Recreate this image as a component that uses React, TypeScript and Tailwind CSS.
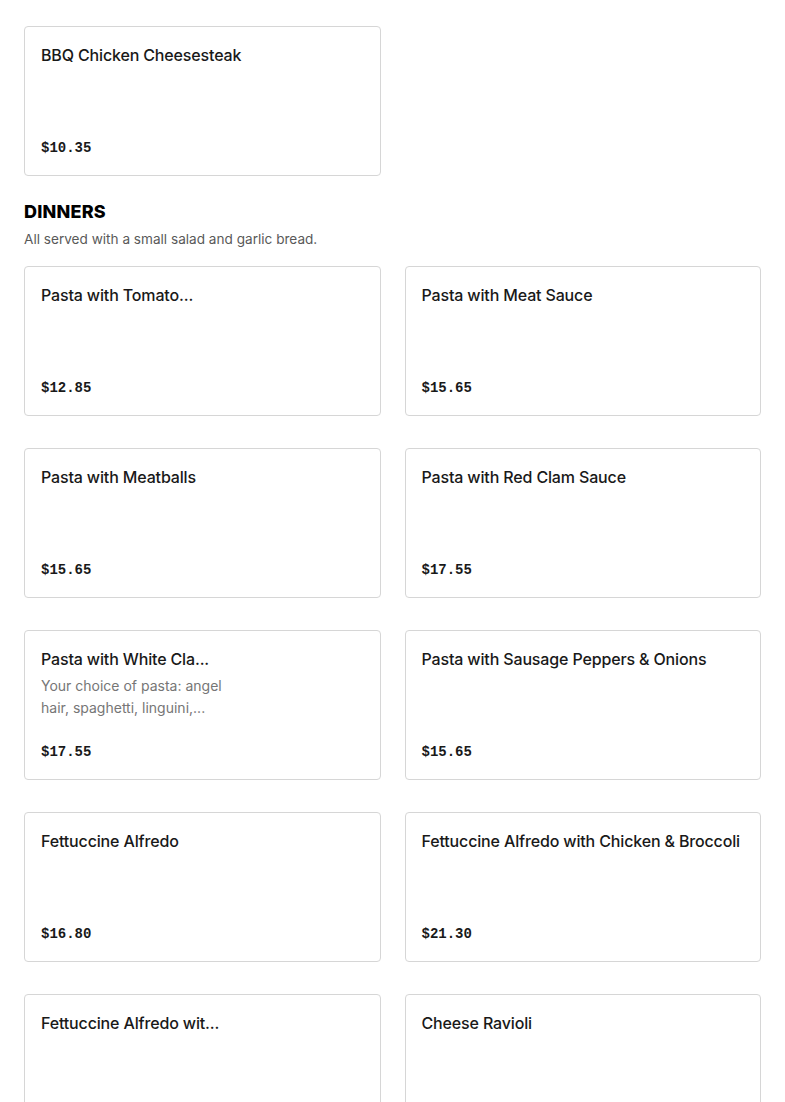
type Item = {
  name: string;
  price?: string;
  desc?: string;
  short?: boolean;
};

const dinners: Item[] = [
  { name: "Pasta with Tomato...", price: "$12.85", short: true },
  { name: "Pasta with Meat Sauce", price: "$15.65" },
  { name: "Pasta with Meatballs", price: "$15.65" },
  { name: "Pasta with Red Clam Sauce", price: "$17.55" },
  {
    name: "Pasta with White Cla...",
    price: "$17.55",
    short: true,
    desc: "Your choice of pasta: angel hair, spaghetti, linguini,...",
  },
  { name: "Pasta with Sausage Peppers & Onions", price: "$15.65" },
  { name: "Fettuccine Alfredo", price: "$16.80" },
  { name: "Fettuccine Alfredo with Chicken & Broccoli", price: "$21.30" },
  { name: "Fettuccine Alfredo wit...", price: "$18.90", short: true },
  { name: "Cheese Ravioli", price: "$14.95" },
];

const Card = ({ item }: { item: Item }) => {
  return (
    <div className="h-[150px] rounded-[4px] border border-[#d6d6d6] bg-white px-4 pt-[16px] pb-[17px] flex flex-col">
      <div
        className={
          "text-[16px] leading-[24px] font-medium tracking-[-0.15px] text-[#191919] whitespace-nowrap " +
          (item.short ? "w-[190px]" : "")
        }
      >
        {item.name}
      </div>
      {item.desc && (
        <div className="mt-[4px] w-[190px] text-[14px] leading-[22px] text-[#767676]">
          {item.desc}
        </div>
      )}
      <div className="mt-auto font-['Liberation_Mono',monospace] text-[14px] leading-[20px] font-bold text-[#191919]">
        {item.price}
      </div>
    </div>
  );
};

export default function App() {
  return (
    <div className="min-h-screen bg-white px-6 pt-[26px] font-['Inter',sans-serif]">
      <div className="grid grid-cols-2 gap-x-6">
        <Card item={{ name: "BBQ Chicken Cheesesteak", price: "$10.35" }} />
      </div>

      <div className="mt-[24px]">
        <h2 className="text-[18px] leading-[24px] font-extrabold tracking-[0.2px] text-black">
          DINNERS
        </h2>
        <p className="mt-[5px] text-[13.6px] leading-[20px] text-[#595959]">
          All served with a small salad and garlic bread.
        </p>
      </div>

      <div className="mt-[17px] grid grid-cols-2 gap-x-6 gap-y-8 pb-10">
        {dinners.map((d) => (
          <Card key={d.name} item={d} />
        ))}
      </div>
    </div>
  );
}
